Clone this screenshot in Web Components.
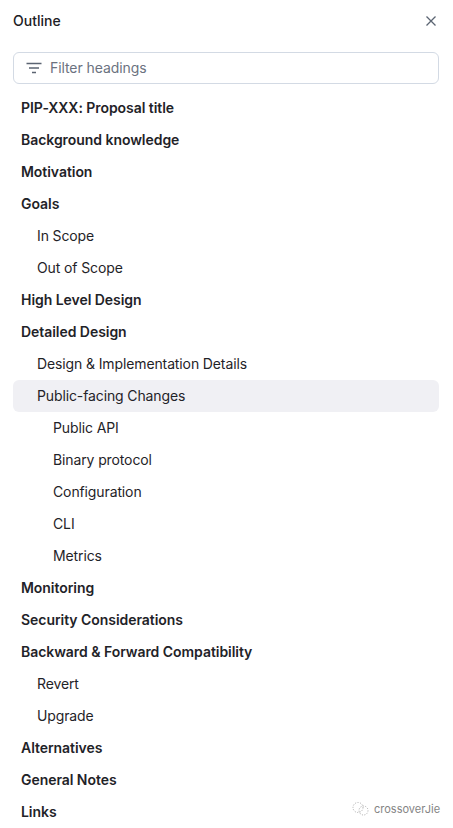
<!DOCTYPE html>
<html>
<head>
<meta charset="utf-8">
<style>
  html, body { margin: 0; padding: 0; background: #fff; height: 100%; overflow: hidden; }
  body { font-family: Inter, "Liberation Sans", sans-serif; }
</style>
</head>
<body>
<outline-panel>
  <outline-item level="1">PIP-XXX: Proposal title</outline-item>
  <outline-item level="1">Background knowledge</outline-item>
  <outline-item level="1">Motivation</outline-item>
  <outline-item level="1">Goals</outline-item>
  <outline-item level="2">In Scope</outline-item>
  <outline-item level="2">Out of Scope</outline-item>
  <outline-item level="1">High Level Design</outline-item>
  <outline-item level="1">Detailed Design</outline-item>
  <outline-item level="2">Design &amp; Implementation Details</outline-item>
  <outline-item level="2" active>Public-facing Changes</outline-item>
  <outline-item level="3">Public API</outline-item>
  <outline-item level="3">Binary protocol</outline-item>
  <outline-item level="3">Configuration</outline-item>
  <outline-item level="3">CLI</outline-item>
  <outline-item level="3">Metrics</outline-item>
  <outline-item level="1">Monitoring</outline-item>
  <outline-item level="1">Security Considerations</outline-item>
  <outline-item level="1">Backward &amp; Forward Compatibility</outline-item>
  <outline-item level="2">Revert</outline-item>
  <outline-item level="2">Upgrade</outline-item>
  <outline-item level="1">Alternatives</outline-item>
  <outline-item level="1">General Notes</outline-item>
  <outline-item level="1">Links</outline-item>
</outline-panel>
<water-mark>crossoverJie</water-mark>

<script>
class OutlinePanel extends HTMLElement {
  constructor() {
    super();
    this.attachShadow({ mode: "open" }).innerHTML = `
      <style>
        :host { display: block; padding: 0 14px 0 13px; color: #1f2328; }
        header { display: flex; justify-content: space-between; align-items: center; height: 41px; }
        h2 { margin: 0; font-size: 14px; font-weight: 500; color: #1c2024; }
        svg { display: block; }
        .close { margin-right: 2px; }
        .filter { display: flex; align-items: center; gap: 8px; box-sizing: border-box; height: 32px; margin-top: 11px; margin-bottom: 8px; padding-left: 12px; padding-bottom: 1px; border: 1px solid #d3dae4; border-radius: 6px; font-size: 14px; letter-spacing: -0.08px; color: #6b7280; }
      </style>
      <header>
        <h2>Outline</h2>
        <svg class="close" width="12" height="12" viewBox="0 0 12 12" fill="none" stroke="#5b6472" stroke-width="1.3"><path d="M1.5 1.5l9 9M10.5 1.5l-9 9"/></svg>
      </header>
      <div class="filter">
        <svg width="16" height="12" viewBox="0 0 16 12" fill="none" stroke="#5b6472" stroke-width="1.3"><path d="M0.5 1.5h15M3 6h10M6 10.5h4"/></svg>
        <span>Filter headings</span>
      </div>
      <slot></slot>`;
  }
}
class OutlineItem extends HTMLElement {
  constructor() {
    super();
    this.attachShadow({ mode: "open" }).innerHTML = `
      <style>
        :host { display: block; box-sizing: border-box; height: 32px; line-height: 32px; font-size: 14px; letter-spacing: -0.12px; border-radius: 6px; white-space: nowrap; }
        :host([level="1"]) { padding-left: 8px; font-weight: 600; letter-spacing: -0.05px; }
        :host([level="2"]) { padding-left: 24px; }
        :host([level="3"]) { padding-left: 40px; }
        :host([active]) { background: #f0f0f4; }
      </style>
      <slot></slot>`;
  }
}
class WaterMark extends HTMLElement {
  constructor() {
    super();
    this.attachShadow({ mode: "open" }).innerHTML = `
      <style>
        :host { position: absolute; left: 352px; top: 802px; display: flex; align-items: center; gap: 5px; font-size: 11px; color: #6f6f6f; opacity: .85; }
      </style>
      <svg width="17" height="14" viewBox="0 0 17 14" fill="none" stroke="#9a9a9a" stroke-width="1" stroke-dasharray="1 1.5"><circle cx="6" cy="5.5" r="5"/><circle cx="11.5" cy="8.5" r="4.5"/></svg>
      <slot></slot>`;
  }
}
customElements.define("outline-panel", OutlinePanel);
customElements.define("outline-item", OutlineItem);
customElements.define("water-mark", WaterMark);
</script>
</body>
</html>
